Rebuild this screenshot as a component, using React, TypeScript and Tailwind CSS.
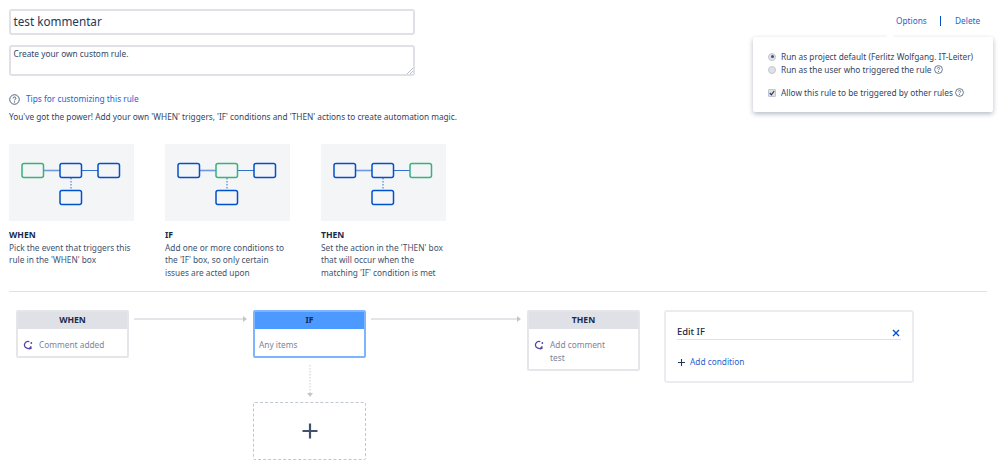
import React from "react";

function Help({ size = 10 }: { size?: number }) {
  return (
    <svg width={size} height={size} viewBox="0 0 12 12" fill="none" className="shrink-0 inline-block">
      <circle cx="6" cy="6" r="5.2" stroke="#42526e" strokeWidth="1" />
      <path d="M4.4 4.8c0-1 .7-1.6 1.6-1.6s1.6.6 1.6 1.4c0 1.2-1.6 1.2-1.6 2.4" stroke="#42526e" strokeWidth="1" />
      <circle cx="6" cy="8.7" r=".7" fill="#42526e" />
    </svg>
  );
}

function Diagram({ active }: { active: 0 | 1 | 2 }) {
  const green = "#36b37e";
  const blue = "#0052cc";
  const boxes = [
    { x: 13, y: 19.5 },
    { x: 51, y: 19.5 },
    { x: 89, y: 19.5 },
    { x: 51, y: 46.5 },
  ];
  return (
    <div className="w-[125px] h-[77px] bg-[#f4f5f7]">
      <svg width="125" height="77" viewBox="0 0 125 77" fill="none">
        <line x1="35" y1="26.5" x2="51" y2="26.5" stroke="#4c84d8" strokeWidth="1.6" opacity="0.8" />
        <line x1="73" y1="26.5" x2="89" y2="26.5" stroke="#2f6fd0" strokeWidth="1" />
        <line x1="62" y1="34" x2="62" y2="46" stroke="#4c84d8" strokeWidth="1.2" strokeDasharray="1.5 1.5" />
        {boxes.map((b, i) => (
          <rect key={i} x={b.x} y={b.y} width="21.5" height="14" rx="2" stroke={i === active ? green : blue} strokeWidth="1.5" fill="none" />
        ))}
      </svg>
    </div>
  );
}

function Card({ active, title, lines }: { active: 0 | 1 | 2; title: string; lines: string[] }) {
  return (
    <div className="w-[125px]">
      <Diagram active={active} />
      <div className="mt-[8px] text-[8.6px] leading-[12.5px] font-bold text-[#172b4d]">{title}</div>
      <div className="text-[8.3px] leading-[12.5px] text-[#42526e] whitespace-nowrap">
        {lines.map((l) => (
          <div key={l}>{l}</div>
        ))}
      </div>
    </div>
  );
}

function Spin() {
  return (
    <svg width="10" height="10" viewBox="0 0 12 12" fill="none" className="shrink-0">
      <path d="M9.9 7.6A4.2 4.2 0 1 1 7.6 2" stroke="#5243aa" strokeWidth="1.5" />
      <path d="M7.4 11.2l3.2-1.8" stroke="#5243aa" strokeWidth="1.3" />
      <circle cx="10" cy="3.6" r="1.1" fill="#5243aa" />
    </svg>
  );
}

function Arrow({ w }: { w: number }) {
  return (
    <svg width={w} height="8" viewBox={`0 0 ${w} 8`} className="shrink-0">
      <line x1="0" y1="4" x2={w - 4} y2="4" stroke="#c7cad1" strokeWidth="1" />
      <path d={`M${w - 4} 1l4 3-4 3z`} fill="#c1c7d0" />
    </svg>
  );
}

function Node({ title, head, children, cls }: { title: string; head: string; children: React.ReactNode; cls: string }) {
  return (
    <div className={`w-[113px] rounded-[2px] border-2 bg-white overflow-hidden ${cls}`}>
      <div className={`h-[17px] pb-[1px] flex items-center justify-center text-[8.6px] font-bold text-[#172b4d] ${head}`}>{title}</div>
      {children}
    </div>
  );
}

export default function App() {
  return (
    <div className="relative w-[999px] h-[471px] bg-white overflow-hidden font-['Noto_Sans',sans-serif] text-[#172b4d]">
      <div className="pt-[9px] px-[9px] pr-[12px]">
        <div className="w-[406px] h-[26px] border-2 border-[#dfe1e6] rounded-[3px] flex items-center px-[2.5px] text-[11.7px] text-[#253858]">test kommentar</div>
        <div className="relative mt-[10px] w-[406px] h-[31px] border-2 border-[#dfe1e6] rounded-[3px] px-[2.5px] py-[1px] text-[8.3px] leading-[12px] text-[#344563]">
          Create your own custom rule.
          <svg width="6" height="6" viewBox="0 0 6 6" className="absolute right-0 bottom-0">
            <path d="M0 6L6 0M3 6L6 3" stroke="#9aa0a9" strokeWidth="0.7" />
          </svg>
        </div>
        <div className="mt-[16px] flex items-center gap-[6px] h-[14px]">
          <Help size={11} />
          <span className="text-[8.3px] text-[#1f63d0]">Tips for customizing this rule</span>
        </div>
        <p className="mt-[5px] text-[8.27px] leading-[12px] text-[#344563] whitespace-nowrap">
          You've got the power! Add your own 'WHEN' triggers, 'IF' conditions and 'THEN' actions to create automation magic.
        </p>
        <div className="mt-[21px] flex gap-[31px]">
          <Card active={0} title="WHEN" lines={["Pick the event that triggers this", "rule in the 'WHEN' box"]} />
          <Card active={1} title="IF" lines={["Add one or more conditions to", "the 'IF' box, so only certain", "issues are acted upon"]} />
          <Card active={2} title="THEN" lines={["Set the action in the 'THEN' box", "that will occur when the", "matching 'IF' condition is met"]} />
        </div>
        <div className="mt-[12px] w-[978px] h-px bg-[#dfe1e6]" />
        <div className="mt-[18px] flex items-start pl-[7px]">
          <Node title="WHEN" head="bg-[#dfe1e6]" cls="h-[48px] border-[#e4e6ea]">
            <div className="flex items-center gap-[6px] px-[5px] pt-[10px] text-[8.3px] leading-[12px] text-[#7a869a]">
              <Spin />
              <span>Comment added</span>
            </div>
          </Node>
          <div className="mt-[5px] ml-[5px] mr-[6px]"><Arrow w={113} /></div>
          <div className="flex flex-col items-center">
            <Node title="IF" head="bg-[#4c9aff]" cls="h-[48px] border-[#7db5ff]">
              <div className="px-[4px] pt-[10px] text-[8.3px] leading-[12px] text-[#7a869a]">Any items</div>
            </Node>
            <svg width="8" height="32" viewBox="0 0 8 32" className="mt-[7px]">
              <line x1="4" y1="0" x2="4" y2="28" stroke="#c7cad1" strokeWidth="1" strokeDasharray="1.5 1.5" />
              <path d="M1 28l3 4 3-4z" fill="#c1c7d0" />
            </svg>
            <div className="mt-[5px] w-[113px] h-[58px] rounded-[2px] border border-dashed border-[#c1c7d0] flex items-center justify-center">
              <svg width="16" height="16" viewBox="0 0 16 16"><path d="M8 .5v15M.5 8h15" stroke="#42526e" strokeWidth="2.2" /></svg>
            </div>
          </div>
          <div className="mt-[5px] ml-[5px] mr-[6px]"><Arrow w={150} /></div>
          <Node title="THEN" head="bg-[#dfe1e6]" cls="h-[61px] border-[#e4e6ea]">
            <div className="flex gap-[6px] px-[5px] pt-[10px] text-[8.3px] leading-[12.5px] text-[#7a869a]">
              <span className="pt-[1px]"><Spin /></span>
              <div>
                <div>Add comment</div>
                <div>test</div>
              </div>
            </div>
          </Node>
          <div className="ml-[24px] w-[250px] h-[73px] border-2 border-[#ebecf0] rounded-[3px] px-[11px] pt-[10px]">
            <div className="flex items-end justify-between border-b border-[#dfe1e6] pb-[1px] h-[18px]">
              <span className="text-[9.4px] font-medium text-[#172b4d] leading-[13px]">Edit IF</span>
              <svg width="8" height="8" viewBox="0 0 8 8" className="mb-[1px] mr-[1px]"><path d="M1 1l6 6M7 1L1 7" stroke="#0052cc" strokeWidth="1.4" /></svg>
            </div>
            <div className="mt-[16px] flex items-center gap-[4px]">
              <svg width="9" height="9" viewBox="0 0 9 9"><path d="M4.5 1v7M1 4.5h7" stroke="#253858" strokeWidth="1.1" /></svg>
              <span className="text-[8.3px] text-[#1f63d0]">Add condition</span>
            </div>
          </div>
        </div>
      </div>

      <div className="absolute top-[15px] left-[896px] text-[8.3px] leading-[12px] text-[#1f63d0]">Options</div>
      <div className="absolute top-[16px] left-[940px] w-px h-[10px] bg-[#0052cc]" />
      <div className="absolute top-[15px] left-[955px] text-[8.3px] leading-[12px] text-[#1f63d0]">Delete</div>

      <div className="absolute left-[753px] top-[37px] w-[240px] h-[75px] bg-white rounded-[2px] shadow-[0_2px_5px_rgba(9,30,66,0.3)] text-[8.3px] leading-[13px] text-[#344563]">
        <div className="absolute -top-[3px] left-[134px] w-[6px] h-[6px] rotate-45 bg-white" />
        <div className="pl-[15px] pt-[13px] flex flex-col">
          <label className="flex items-center gap-[5px] h-[13px]">
            <span className="w-[8px] h-[8px] rounded-full bg-[#dfe1e6] border border-[#c1c7d0] flex items-center justify-center"><span className="w-[3px] h-[3px] rounded-full bg-[#42526e]" /></span>
            Run as project default (Ferlitz Wolfgang. IT-Leiter)
          </label>
          <label className="flex items-center gap-[5px] h-[13px]">
            <span className="w-[8px] h-[8px] rounded-full bg-[#dfe1e6] border border-[#c1c7d0]" />
            <span>Run as the user who triggered the rule</span>
            <span className="-ml-[3px] flex"><Help size={9} /></span>
          </label>
          <label className="mt-[10px] flex items-center gap-[5px] h-[13px]">
            <span className="w-[8px] h-[8px] rounded-[1px] bg-[#dfe1e6] border border-[#c1c7d0] flex items-center justify-center">
              <svg width="6" height="6" viewBox="0 0 6 6"><path d="M.8 3l1.6 1.8L5.2 1" fill="none" stroke="#253858" strokeWidth="1.2" /></svg>
            </span>
            <span>Allow this rule to be triggered by other rules</span>
            <span className="-ml-[3px] flex"><Help size={9} /></span>
          </label>
        </div>
      </div>
    </div>
  );
}
